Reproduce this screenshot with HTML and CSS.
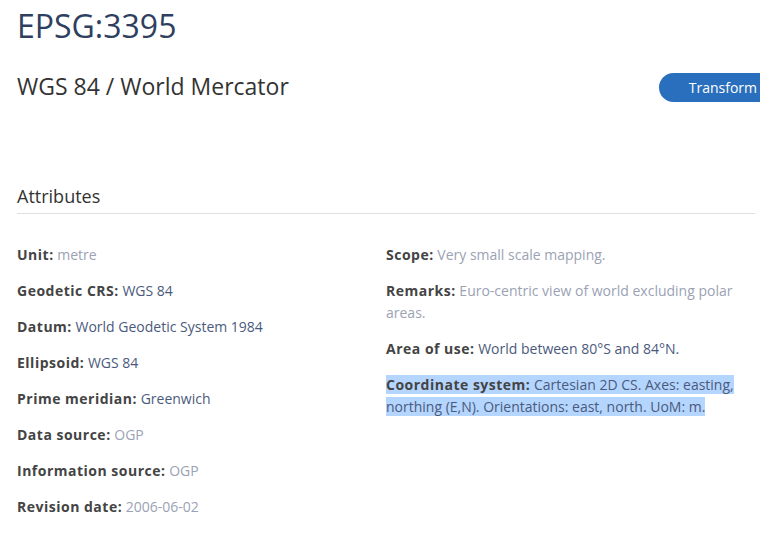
FILE: index.html
```html
<!DOCTYPE html>
<html lang="en">
<head>
<meta charset="utf-8">
<title>EPSG:3395</title>
<link rel="stylesheet" href="styles.css">
</head>
<body>
<div class="page">
  <h1 class="code">EPSG:3395</h1>
  <div class="head">
    <h2 class="name">WGS 84 / World Mercator</h2>
    <button class="btn">Transform</button>
  </div>
  <section class="attrs">
    <h3 class="section-title">Attributes</h3>
    <div class="grid">
      <div class="col">
        <p class="row"><b>Unit:</b> <span class="muted">metre</span></p>
        <p class="row"><b>Geodetic CRS:</b> <span class="link">WGS 84</span></p>
        <p class="row"><b>Datum:</b> <span class="link">World Geodetic System 1984</span></p>
        <p class="row"><b>Ellipsoid:</b> <span class="link">WGS 84</span></p>
        <p class="row"><b>Prime meridian:</b> <span class="link">Greenwich</span></p>
        <p class="row"><b>Data source:</b> <span class="muted">OGP</span></p>
        <p class="row"><b>Information source:</b> <span class="muted">OGP</span></p>
        <p class="row"><b>Revision date:</b> <span class="muted">2006-06-02</span></p>
      </div>
      <div class="col">
        <p class="row"><b>Scope:</b> <span class="muted">Very small scale mapping.</span></p>
        <p class="row"><b>Remarks:</b> <span class="muted">Euro-centric view of world excluding polar areas.</span></p>
        <p class="row"><b>Area of use:</b> <span class="link">World between 80°S and 84°N.</span></p>
        <p class="row"><span class="sel"><b>Coordinate system:</b> <span class="link">Cartesian 2D CS. Axes: easting, northing (E,N). Orientations: east, north. UoM: m.</span></span></p>
      </div>
    </div>
  </section>
</div>
</body>
</html>
```

FILE: styles.css
```css
html, body {
  margin: 0;
  padding: 0;
  background: #fff;
  overflow: hidden;
}
body {
  font-family: "Open Sans", "Liberation Sans", sans-serif;
  font-size: 14px;
  color: #444;
}
.page {
  padding: 4px 5px 0 17px;
}
.code {
  margin: 0;
  font-size: 32px;
  line-height: 44px;
  font-weight: 500;
  color: #2f3f5f;
}
.head {
  display: flex;
  align-items: center;
  justify-content: space-between;
  margin-top: 21px;
  margin-right: -32px;
}
.name {
  margin: 0;
  font-size: 23px;
  line-height: 30px;
  font-weight: 400;
  color: #333;
}
.btn {
  font-family: inherit;
  font-size: 14px;
  line-height: 29px;
  height: 29px;
  padding: 0 30px 0 30px;
  border: 0;
  border-radius: 15px 0 0 15px;
  background: #2a6fbd;
  color: #fff;
  margin-top: 4px;
}
.attrs {
  margin-top: 81px;
}
.section-title {
  margin: 0;
  font-size: 18px;
  line-height: 26px;
  font-weight: 400;
  color: #333;
  padding-bottom: 4px;
  border-bottom: 1px solid #e0e0e0;
}
.grid {
  display: grid;
  grid-template-columns: 1fr 1fr;
  padding-top: 30px;
}
.row {
  margin: 0 0 14px;
  line-height: 22px;
}
.row b {
  font-weight: 700;
  color: #444;
  letter-spacing: 0.5px;
}
.muted {
  color: #9ba2b4;
}
.link {
  color: #4b5a7c;
}
.sel {
  background: #b4d5fe;
}
```
